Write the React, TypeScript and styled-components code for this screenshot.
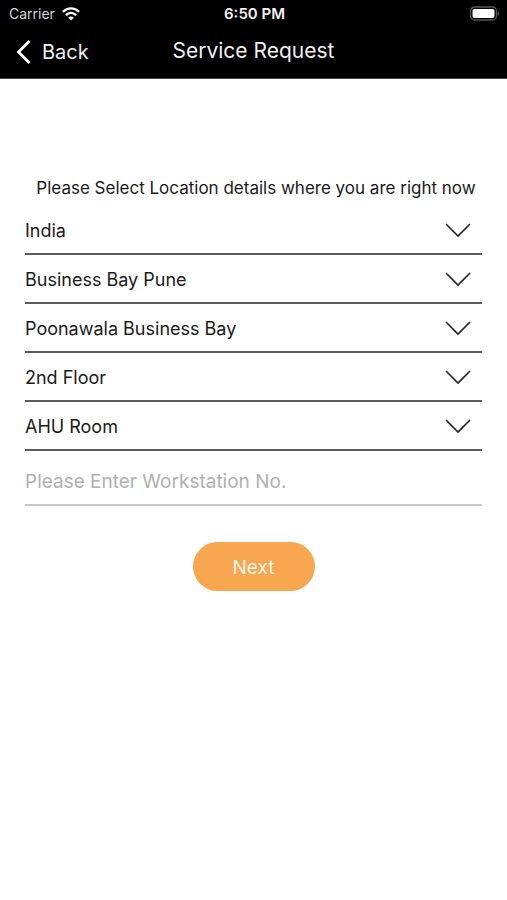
import React, { useState } from "react";
import styled, { createGlobalStyle } from "styled-components";

const GlobalStyle = createGlobalStyle`
  *, *::before, *::after { box-sizing: border-box; }
  body {
    margin: 0;
    background: #fff;
    color: #1a1a1a;
    font-family: Inter, "Liberation Sans", sans-serif;
  }
  button, input, select { font: inherit; color: inherit; }
`;

const Screen = styled.div`
  min-height: 100vh;
  background: #fff;
`;

const Header = styled.header`
  background: #000;
  color: #f2f2f2;
  border-bottom: 1px solid #4a4a4a;
`;

const StatusBar = styled.div`
  display: grid;
  grid-template-columns: 1fr auto 1fr;
  align-items: center;
  height: 27px;
  padding: 0 7px 0 9px;
  font-size: 14px;
  line-height: 20px;
`;

const Carrier = styled.span`
  display: flex;
  align-items: center;
  gap: 7px;
  color: #d6d6d6;
`;

const Clock = styled.time`
  font-weight: 600;
  font-size: 15px;
`;

const BatteryIcon = styled.svg`
  justify-self: end;
`;

const NavBar = styled.nav`
  display: grid;
  grid-template-columns: 1fr auto 1fr;
  align-items: start;
  height: 51px;
  padding: 0 16px;
`;

const BackButton = styled.button`
  display: flex;
  align-items: center;
  justify-self: start;
  gap: 10px;
  height: 50px;
  padding: 0;
  border: 0;
  background: none;
  font-size: 20px;
  line-height: 28px;
  cursor: pointer;
`;

const Title = styled.h1`
  margin: 0;
  font-size: 21px;
  line-height: 48px;
  font-weight: 400;
`;

const Form = styled.form`
  display: flex;
  flex-direction: column;
  padding: 98px 25px 0;
`;

const Prompt = styled.p`
  margin: 0 0 7px;
  padding-left: 5px;
  text-align: center;
  font-size: 17px;
  line-height: 22px;
`;

const SelectRow = styled.div`
  display: grid;
  grid-template-columns: 1fr auto;
  align-items: center;
  height: 49px;
  border-bottom: 2px solid #5c5c5c;
`;

const Select = styled.select`
  grid-area: 1 / 1 / 2 / 3;
  width: 100%;
  height: 47px;
  padding: 2px 40px 0 0;
  border: 0;
  background: none;
  appearance: none;
  font-size: 18px;
  line-height: 24px;
  cursor: pointer;
`;

const ChevronDown = styled.svg`
  grid-area: 1 / 2 / 2 / 3;
  margin-right: 10px;
  pointer-events: none;
`;

const TextInput = styled.input`
  height: 55px;
  padding: 8px 0 0;
  border: 0;
  border-bottom: 2px solid #c8c8c8;
  background: none;
  font-size: 19px;
  line-height: 24px;
  &::placeholder { color: #b0b0b0; opacity: 1; }
`;

const NextButton = styled.button`
  align-self: center;
  width: 122px;
  height: 49px;
  margin-top: 36px;
  padding: 2px 0 0;
  border: 0;
  border-radius: 25px;
  background: #f8a650;
  color: #fff5e8;
  font-size: 19px;
  line-height: 24px;
  cursor: pointer;
`;

const locations = [
  { label: "Country", value: "India" },
  { label: "Site", value: "Business Bay Pune" },
  { label: "Building", value: "Poonawala Business Bay" },
  { label: "Floor", value: "2nd Floor" },
  { label: "Room", value: "AHU Room" },
];

function LocationSelect({ label, value }: { label: string; value: string }) {
  return (
    <SelectRow>
      <Select aria-label={label} defaultValue={value}>
        <option>{value}</option>
      </Select>
      <ChevronDown width="28" height="16" viewBox="0 0 28 16" fill="none" stroke="#222" strokeWidth="1.6" aria-hidden="true">
        <path d="M2 2 L14 14 L26 2" />
      </ChevronDown>
    </SelectRow>
  );
}

export default function App() {
  const [workstation, setWorkstation] = useState("");
  return (
    <Screen>
      <GlobalStyle />
      <Header>
        <StatusBar>
          <Carrier>
            Carrier
            <svg width="18" height="14" viewBox="0 0 18 14" fill="none" stroke="#fff" strokeWidth="2.3" aria-hidden="true">
              <path d="M0.9 4.9 C5.4 0.3 12.6 0.3 17.1 4.9" />
              <path d="M3.9 8.1 C6.7 5.2 11.3 5.2 14.1 8.1" />
              <path d="M9 13.6 L6.2 10.7 C7.8 9.2 10.2 9.2 11.8 10.7 Z" fill="#fff" stroke="none" />
            </svg>
          </Carrier>
          <Clock>6:50 PM</Clock>
          <BatteryIcon width="31" height="15" viewBox="0 0 31 15" fill="none" aria-hidden="true">
            <rect x="1.5" y="1" width="26" height="13" rx="4" stroke="#555" strokeWidth="1.3" />
            <rect x="3.5" y="3" width="22" height="9" rx="2" fill="#fff" />
            <path d="M28.8 5 C30.8 5.8 30.8 9.2 28.8 10 Z" fill="#555" />
          </BatteryIcon>
        </StatusBar>
        <NavBar>
          <BackButton type="button">
            <svg width="16" height="24" viewBox="0 0 16 24" fill="none" stroke="#fff" strokeWidth="2.8" aria-hidden="true">
              <path d="M13.5 1 L2.5 12 L13.5 23" />
            </svg>
            Back
          </BackButton>
          <Title>Service Request</Title>
        </NavBar>
      </Header>
      <Form onSubmit={(e) => e.preventDefault()}>
        <Prompt>Please Select Location details where you are right now</Prompt>
        {locations.map((l) => (
          <LocationSelect key={l.label} {...l} />
        ))}
        <TextInput
          aria-label="Workstation number"
          placeholder="Please Enter Workstation No."
          value={workstation}
          onChange={(e) => setWorkstation(e.target.value)}
        />
        <NextButton type="submit">Next</NextButton>
      </Form>
    </Screen>
  );
}
